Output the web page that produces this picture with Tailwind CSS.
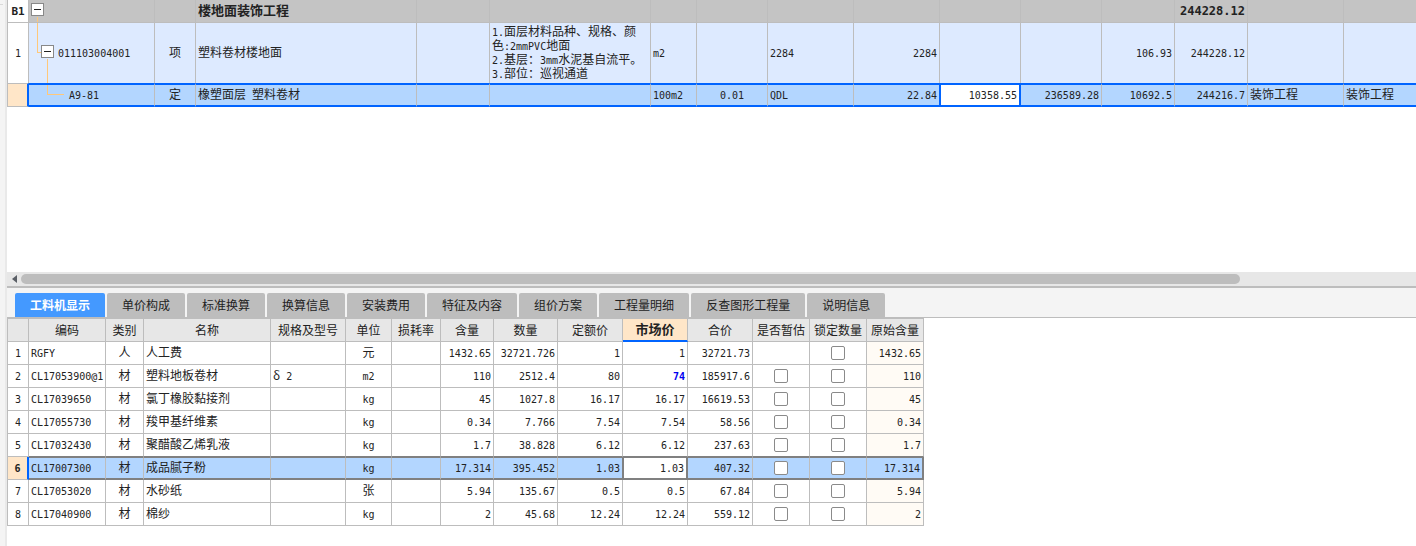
<!DOCTYPE html>
<html lang="zh-CN">
<head>
<meta charset="utf-8">
<title>楼地面装饰工程</title>
<script src="https://cdn.jsdelivr.net/npm/@tailwindcss/browser@4"></script>
</head>
<body class="flex min-h-screen overflow-x-hidden bg-white font-['Noto_Sans_CJK_SC',sans-serif] text-[12px] leading-[14px] text-[#222]">
<aside class="w-[7px] shrink-0 border-r-2 border-[#e9e9e9] bg-[#f4f4f4]"><div class="mt-1 h-px w-[3px] bg-[#d9d9d9]"></div></aside>
<main class="flex min-w-0 flex-1 flex-col">

<!-- Bill of quantities -->
<section class="flex-1 overflow-hidden">
<table class="w-full table-fixed border-separate border-spacing-0 border-l border-[#bdbdbd]">
<colgroup>
<col class="w-[21px]"><col class="w-[126px]"><col class="w-[41px]"><col class="w-[221px]"><col class="w-[73px]"><col class="w-[161px]"><col class="w-[46px]"><col class="w-[71px]"><col class="w-[86px]"><col class="w-[86px]"><col class="w-[81px]"><col class="w-[81px]"><col class="w-[73px]"><col class="w-[73px]"><col class="w-[96px]"><col>
</colgroup>
<tbody id="bill"></tbody>
</table>
</section>

<!-- Horizontal scroll bar -->
<div class="flex h-[14px] items-center bg-[#e7e7e7]">
<button class="flex h-[14px] w-[14px] shrink-0 items-center justify-center" aria-label="向左滚动"><svg class="h-[8px] w-[5px]" viewBox="0 0 5 8"><path d="M5 0v8L0 4z" fill="#5a5f66"/></svg></button>
<div class="mr-[176px] h-[10px] flex-1 rounded-full bg-[#bdbdbd]"></div>
</div>

<!-- Detail tabs -->
<div class="flex h-[32px] items-end gap-[2px] border-t-2 border-b border-[#bdbdbd] bg-[#f4f4f4] pl-2" role="tablist" id="tabs"></div>

<!-- Labour, material and machine details -->
<section class="pb-5">
<table class="w-[917px] table-fixed border-separate border-spacing-0 border-t border-l border-[#bdbdbd]">
<colgroup>
<col class="w-[21px]"><col class="w-[77px]"><col class="w-[38px]"><col class="w-[127px]"><col class="w-[75px]"><col class="w-[46px]"><col class="w-[49px]"><col class="w-[53px]"><col class="w-[64px]"><col class="w-[65px]"><col class="w-[65px]"><col class="w-[65px]"><col class="w-[57px]"><col class="w-[57px]"><col class="w-[57px]">
</colgroup>
<thead><tr id="head"></tr></thead>
<tbody id="detail"></tbody>
</table>
</section>
</main>

<script>
// Latin runs are set in a narrow monospace beside the Chinese glyphs
const run = (s, size) => String(s).replace(/[\x20-\x7e]+/g, m => `<span class="font-['DejaVu_Sans_Mono',monospace] leading-none ${size}">${m}</span>`);
const mono = s => run(s, 'text-[10px]');
const big = s => run(s, 'text-[12px]');
const L = 'text-left', C = 'text-center', R = 'text-right';

const toggle = '<button class="flex h-[13px] w-[13px] shrink-0 items-center justify-center border border-[#888] bg-white" aria-label="折叠"><span class="h-px w-[7px] bg-[#222]"></span></button>';
const line = cls => `<span class="absolute bg-[#ffc87a] ${cls}"></span>`;

// Bill rows
const aligns = [L, C, L, L, L, L, C, L, R, R, R, R, R, L, L];
const rows = [
  { no: 'B1', h: 'h-[23px]', bg: 'bg-[#c4c4c4] font-bold text-[13px]', edge: 'border-b', head: 'bg-white border-b', pad: 'pb-[3px]', fmt: big,
    tree: `<div class="flex items-center">${toggle}</div>` + line('top-[17px] left-[8px] h-[5px] w-px'),
    cells: ['', '楼地面装饰工程', '', '', '', '', '', '', '', '', '', '244228.12', '', ''] },
  { no: '1', h: 'h-[60px]', bg: 'bg-[#ddeaff]', edge: '', head: 'bg-white', pad: 'pb-[3px]', fmt: mono,
    tree: line('top-0 left-[8px] h-[30px] w-px') + line('top-[29px] left-[8px] h-px w-[4px]') + line('top-[36px] left-[18px] h-[24px] w-px') +
      `<div class="flex items-center gap-1 pl-[10px]">${toggle}<span>${mono('011103004001')}</span></div>`,
    cells: ['项', '塑料卷材楼地面', '', '1.面层材料品种、规格、颜<br>色:2mmPVC地面<br>2.基层：3mm水泥基自流平。<br>3.部位：巡视通道', 'm2', '', '2284', '2284', '', '', '106.93', '244228.12', '', ''] },
  { no: '', h: 'h-[24px]', bg: 'bg-[#b3d6ff]', edge: 'border-y-2 border-y-[#0064ff]', head: 'bg-[#ffe6c8] border-y border-r-2 border-r-[#0064ff]', pad: 'pb-[3px]', fmt: mono, selected: true,
    tree: line('top-0 left-[18px] h-[10px] w-px') + line('top-[9px] left-[18px] h-px w-[17px]') + `<div class="pl-[38px]">${mono('A9-81')}</div>`,
    cells: ['定', '橡塑面层 塑料卷材', '', '', '100m2', '0.01', 'QDL', '22.84', '10358.55', '236589.28', '10692.5', '244216.7', '装饰工程', '装饰工程'] },
];
document.getElementById('bill').innerHTML = rows.map(r => {
  const text = s => s.split('<br>').map(r.fmt).join('<br>');
  const under = r.selected ? '' : 'border-b-[#bdbdbd]';
  const cells = r.cells.map((c, i) => {
    let bg = r.bg, side = i === 13 ? '' : 'border-r border-r-[#bdbdbd]';
    if (r.selected && i === 7) side = 'border-r border-r-[#0064ff]';
    if (r.selected && i === 8) { bg = 'bg-white'; side = 'border-l border-r-2 border-x-[#0064ff]'; }
    return `<td class="${r.edge} ${side} ${bg} ${r.pad} ${aligns[i + 1]} ${under} px-[2px] whitespace-nowrap">${text(c)}</td>`;
  });
  const side = r.selected ? '' : 'border-r border-r-[#bdbdbd]';
  const no = r.no === 'B1' ? `<b>${run(r.no, 'text-[11px]')}</b>` : mono(r.no);
  return `<tr class="${r.h}"><th class="${r.head} ${side} ${r.pad} border-y-[#bdbdbd] text-center font-normal">${no}</th>` +
    `<td class="relative ${r.edge} ${under} border-r border-r-[#bdbdbd] ${r.bg} ${r.pad} px-[2px]">${r.tree}</td>${cells.join('')}</tr>`;
}).join('');

// Tabs
document.getElementById('tabs').innerHTML = ['工料机显示', '单价构成', '标准换算', '换算信息', '安装费用', '特征及内容', '组价方案', '工程量明细', '反查图形工程量', '说明信息'].map((t, i) =>
  `<button role="tab" class="h-[24px] rounded-t-[2px] px-[15px] whitespace-nowrap ${i ? 'bg-[#bdbdbd]' : 'bg-[#4499ff] font-bold text-white'}">${t}</button>`).join('');

// Detail header
document.getElementById('head').innerHTML = ['', '编码', '类别', '名称', '规格及型号', '单位', '损耗率', '含量', '数量', '定额价', '市场价', '合价', '是否暂估', '锁定数量', '原始含量'].map(t =>
  `<th class="h-[23px] border-r border-r-[#bdbdbd] whitespace-nowrap ${t === '市场价' ? 'border-b-2 border-b-[#0064ff] bg-[#ffe6c8] pb-[2px] text-[13px] font-bold' : 'border-b border-b-[#bdbdbd] bg-[#e7e7e7] font-normal'}">${t}</th>`).join('');

// Detail rows
const detail = [
  ['RGFY', '人', '人工费', '', '元', '', '1432.65', '32721.726', '1', '1', '32721.73', '1432.65'],
  ['CL17053900@1', '材', '塑料地板卷材', 'δ 2', 'm2', '', '110', '2512.4', '80', '74', '185917.6', '110'],
  ['CL17039650', '材', '氯丁橡胶黏接剂', '', 'kg', '', '45', '1027.8', '16.17', '16.17', '16619.53', '45'],
  ['CL17055730', '材', '羧甲基纤维素', '', 'kg', '', '0.34', '7.766', '7.54', '7.54', '58.56', '0.34'],
  ['CL17032430', '材', '聚醋酸乙烯乳液', '', 'kg', '', '1.7', '38.828', '6.12', '6.12', '237.63', '1.7'],
  ['CL17007300', '材', '成品腻子粉', '', 'kg', '', '17.314', '395.452', '1.03', '1.03', '407.32', '17.314'],
  ['CL17053020', '材', '水砂纸', '', '张', '', '5.94', '135.67', '0.5', '0.5', '67.84', '5.94'],
  ['CL17040900', '材', '棉纱', '', 'kg', '', '2', '45.68', '12.24', '12.24', '559.12', '2'],
];
const dAlign = [L, C, L, L, C, L, R, R, R, R, R, R];
const check = label => `<input type="checkbox" aria-label="${label}" class="mx-auto block h-[14px] w-[14px] appearance-none rounded-[2px] border border-[#8a8a8a] bg-white">`;
document.getElementById('detail').innerHTML = detail.map((d, n) => {
  const sel = n === 5;
  const edge = sel ? 'border-t border-b-2 border-y-[#808080]' : n === 4 ? 'border-b border-b-[#808080]' : 'border-b border-b-[#bdbdbd]';
  const td = (html, align, bg, side) => `<td class="${edge} ${side || 'border-r border-r-[#bdbdbd]'} ${sel ? bg === 'bg-white' ? bg : 'bg-[#b3d6ff]' : bg} ${align} whitespace-nowrap">${html}</td>`;
  const cells = d.slice(0, 11).map((c, i) => {
    const active = sel && i === 9;
    const html = n === 1 && i === 9 ? `<b class="text-[#0000f0]">${mono(c)}</b>` : mono(c);
    return td(html, dAlign[i] + ' px-[2px] pb-[3px]', active ? 'bg-white' : '', active ? 'border-l border-r-2 border-x-[#808080]' : sel && i === 8 ? 'border-r border-r-[#808080]' : '');
  });
  return `<tr class="h-[23px]"><th class="border-b border-b-[#bdbdbd] pb-[3px] ${sel ? 'border-r-2 border-r-[#0064ff] bg-[#ffe6c8] font-bold' : 'border-r border-r-[#bdbdbd] font-normal'}">${mono(n + 1)}</th>${cells.join('')}` +
    td(n ? check('是否暂估 ' + d[2]) : '', C, '') + td(check('锁定数量 ' + d[2]), C, '') +
    td(mono(d[11]), R + ' px-[2px] pb-[3px]', 'bg-[#fffbf5]', sel ? 'border-r-2 border-r-[#808080]' : '') + '</tr>';
}).join('');
</script>
</body>
</html>
